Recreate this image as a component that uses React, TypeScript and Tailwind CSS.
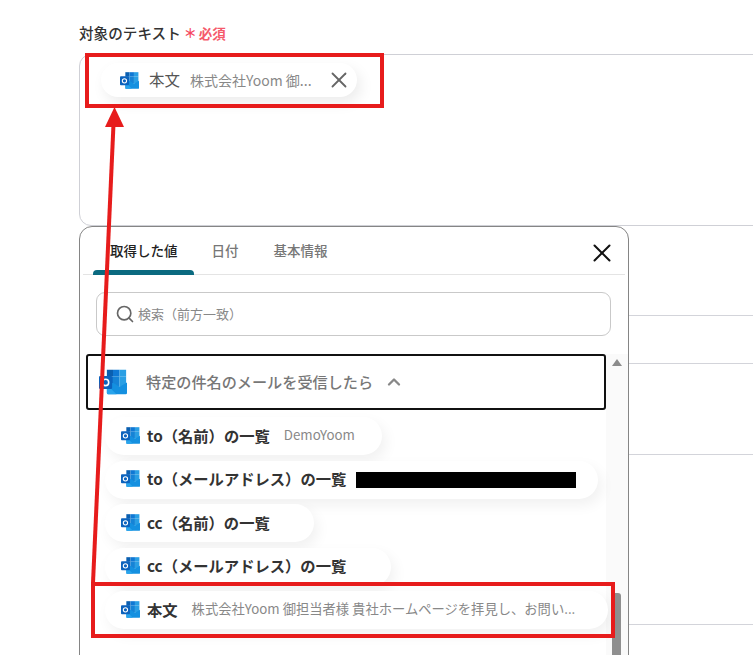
import React from 'react';
import { Search, X, ChevronUp } from 'lucide-react';

const OutlookIcon = ({ className }: { className: string }) => (
  <svg className={className} viewBox="0 0 32 28" fill="none">
    <rect x="9" y="0" width="7" height="7.500" fill="#0a5fb0" />
    <rect x="16" y="0" width="7.500" height="7.500" fill="#0f78d4" />
    <rect x="23.500" y="0" width="7.500" height="7.500" fill="#2a9fe4" />
    <rect x="9" y="7.500" width="7" height="8" fill="#0f6fc8" />
    <rect x="16" y="7.500" width="7.500" height="12" fill="#1583d6" />
    <rect x="23.500" y="7.500" width="7.500" height="12" fill="#2a9fe4" />
    <path d="M9 15h7.500l7 4.500 8.500-5V26.500A1.500 1.500 0 0 1 30.500 28H10.500A1.500 1.500 0 0 1 9 26.500z" fill="#1490e0" />
    <path d="M9 17l11 11h-9.500A1.500 1.500 0 0 1 9 26.500z" fill="#28a4ec" />
    <rect x="0" y="7" width="15" height="15" rx="1.500" fill="#0c63bd" />
    <circle cx="7.500" cy="14.500" r="3.600" stroke="#fff" strokeWidth="1.800" />
  </svg>
);

const ValueChip = ({ name, value, className }: { name: string; value?: string; className: string }) => (
  <div className={`flex h-[38px] shrink-0 items-center rounded-full bg-white pb-[2px] pl-[16px] shadow-[4px_6px_14px_rgba(0,0,0,0.06)] ${className}`}>
    <OutlookIcon className="h-[17px] w-[19px] shrink-0" />
    <span className="ml-[7px] shrink-0 text-[15.300px] font-bold text-[#333]">{name}</span>
    {value && <span className="ml-[14px] text-[13.300px] whitespace-nowrap text-[#888]">{value}</span>}
  </div>
);

const Popup = () => (
  <div className="absolute top-[226px] left-[79px] h-[440px] w-[550px] rounded-t-[13px] border border-[#858585] bg-white">
    <div className="relative mx-[3px] flex h-[48px] border-b border-[#e4e4e4] pl-[27px] text-[13.500px] font-medium">
      <div className="pt-[13px] text-[#222]">取得した値</div>
      <div className="ml-[34px] pt-[13px] text-[#777]">日付</div>
      <div className="ml-[35px] pt-[13px] text-[#777]">基本情報</div>
      <div className="absolute bottom-[-1px] left-[10px] h-[5px] w-[101px] rounded-t-[4px] bg-[#0b6a80]" />
      <X className="absolute top-[11px] right-[8px] h-[30px] w-[30px] text-[#111]" strokeWidth={1.6} />
    </div>

    <div className="mt-[17px] ml-[16px] flex h-[44px] w-[515px] items-center rounded-[9px] border border-[#c9c9c9] pl-[18px]">
      <Search className="h-[20px] w-[20px] text-[#666]" strokeWidth={2} />
      <span className="ml-[3px] text-[13px] text-[#888]">検索（前方一致）</span>
    </div>

    <div className="relative mt-[18px] ml-[6px] w-[537px]">
      <div className="absolute top-0 left-[520px] h-[320px] w-[22px] bg-[#fafafa]">
        <div className="absolute top-[5px] left-[6px] h-0 w-0 border-x-[5px] border-b-[7px] border-x-transparent border-b-[#8c8c8c]" />
        <div className="absolute top-[239px] left-[6px] h-[80px] w-[9px] rounded-t-[3px] bg-[#8f8f8f]" />
      </div>
      <div className="relative flex h-[56px] w-[520px] items-center rounded-[3px] border-2 border-[#111] bg-white pl-[11px]">
        <OutlookIcon className="h-[28px] w-[28px] shrink-0" />
        <span className="ml-[19px] pb-[2px] text-[15.150px] font-medium text-[#777]">特定の件名のメールを受信したら</span>
        <ChevronUp className="ml-[11px] h-[20px] w-[20px] text-[#888]" strokeWidth={2.8} />
      </div>
      <div className="relative mt-[7px] ml-[19px] flex flex-col gap-[5.500px]">
        <ValueChip className="w-[277px]" name="to（名前）の一覧" value="DemoYoom" />
        <ValueChip className="w-[493px]" name="to（メールアドレス）の一覧" />
        <ValueChip className="w-[209px]" name="cc（名前）の一覧" />
        <ValueChip className="w-[286px]" name="cc（メールアドレス）の一覧" />
        <ValueChip className="w-[503px]" name="本文" value="株式会社Yoom 御担当者様 貴社ホームページを拝見し、お問い..." />
      </div>
    </div>
  </div>
);

export default function App() {
  return (
    <div className="relative h-[655px] w-[753px] overflow-hidden bg-white font-['Noto_Sans_CJK_JP',sans-serif]">
      {/* form behind the popup */}
      <div className="pt-[23px] pl-[79px]">
        <div className="flex h-[20px] items-center">
          <span className="text-[14.600px] font-medium text-[#333]">対象のテキスト</span>
          <span className="ml-[3px] w-[13px] text-[13px] font-bold text-[#f5485f]">＊</span>
          <span className="ml-[2px] text-[13.500px] font-bold text-[#f5596b]">必須</span>
        </div>
        <div className="mt-[11px] h-[172px] w-[700px] rounded-l-[12px] border border-[#cfd0d6] pt-[8px] pl-[21px]">
          <div className="flex h-[34px] w-[256px] items-center rounded-full bg-white pr-[5px] pl-[19px] shadow-[4px_6px_14px_rgba(0,0,0,0.08)]">
            <OutlookIcon className="h-[17px] w-[19px] shrink-0" />
            <span className="ml-[10px] text-[15.500px] text-[#555]">本文</span>
            <span className="ml-[10px] text-[14px] whitespace-nowrap text-[#888]">株式会社Yoom 御...</span>
            <X className="ml-auto h-[26px] w-[26px] shrink-0 text-[#666]" strokeWidth={1.7} />
          </div>
        </div>
        <div className="mt-[89px] h-[49px] w-[700px] border-y border-[#d3d4da]" />
        <div className="mt-[90px] h-[171px] w-[700px] border-y border-[#d3d4da]" />
      </div>

      <Popup />

      {/* black mask over the address */}
      <div className="absolute top-[472px] left-[356px] h-[16px] w-[220px] bg-black" />

      {/* red annotations */}
      <div className="absolute top-[53px] left-[85px] h-[55px] w-[299px] border-[4px] border-[#e71c1c]" />
      <div className="absolute top-[582px] left-[91px] h-[56px] w-[524px] border-[4px] border-[#e71c1c]" />
      <svg className="absolute top-0 left-0 h-[655px] w-[753px]" viewBox="0 0 753 655" fill="none">
        <path d="M93 583L113.500 124" stroke="#e71c1c" strokeWidth="4" />
        <path d="M114.500 107L124 127H105z" fill="#e71c1c" />
      </svg>
    </div>
  );
}
